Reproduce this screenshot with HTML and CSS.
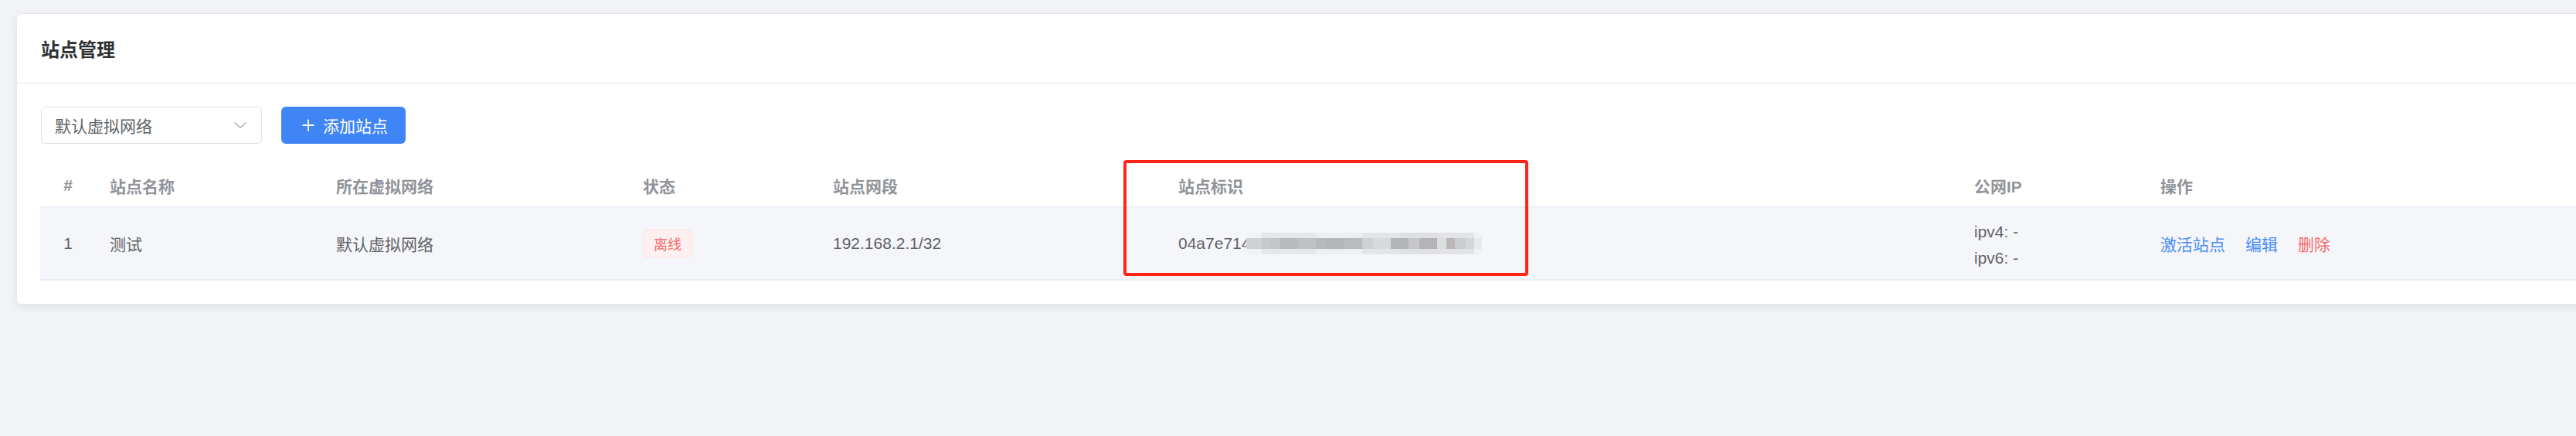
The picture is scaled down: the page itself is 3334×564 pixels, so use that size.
FILE: index.html
```html
<!DOCTYPE html>
<html lang="zh-CN">
<head>
<meta charset="utf-8">
<title>站点管理</title>
<link rel="stylesheet" href="styles.css">
</head>
<body>
<div class="page">
  <div class="card">
    <div class="card-header">站点管理</div>
    <div class="card-body">
      <div class="toolbar">
        <div class="select">
          <span class="select-text">默认虚拟网络</span>
          <svg class="select-arrow" width="16" height="8" viewBox="0 0 16 8"><path d="M0.5 0.5 L8 7.3 L15.5 0.5" fill="none" stroke="#a8abb2" stroke-width="1.3"/></svg>
        </div>
        <button class="btn-primary">
          <svg class="plus" width="16" height="16" viewBox="0 0 16 16"><path d="M8 0.5 V15.5 M0.5 8 H15.5" stroke="#fff" stroke-width="1.8" fill="none"/></svg>
          <span>添加站点</span>
        </button>
      </div>
      <div class="table">
        <div class="tr thead">
          <div class="cell idx">#</div>
          <div class="cell">站点名称</div>
          <div class="cell">所在虚拟网络</div>
          <div class="cell">状态</div>
          <div class="cell">站点网段</div>
          <div class="cell">站点标识</div>
          <div class="cell">公网IP</div>
          <div class="cell">操作</div>
        </div>
        <div class="tr tbody">
          <div class="cell idx">1</div>
          <div class="cell">测试</div>
          <div class="cell">默认虚拟网络</div>
          <div class="cell"><span class="tag-danger">离线</span></div>
          <div class="cell">192.168.2.1/32</div>
          <div class="cell"><span class="sid">04a7e714</span><span class="mosaic"></span></div>
          <div class="cell ips"><div>ipv4: -</div><div>ipv6: -</div></div>
          <div class="cell ops">
            <span class="link">激活站点</span>
            <span class="link">编辑</span>
            <span class="link danger">删除</span>
          </div>
        </div>
        <div class="highlight"></div>
      </div>
    </div>
  </div>
</div>
</body>
</html>
```
FILE: styles.css
```css
html, body {
  margin: 0;
  padding: 0;
}
body {
  background: #f2f3f7;
  font-family: "Liberation Sans", "Noto Sans CJK SC", sans-serif;
  overflow: hidden;
  width: 3334px;
  height: 564px;
}
.page {
  padding: 17px 0 0 21px;
}
.card {
  width: 3360px;
  background: #fff;
  border: 1px solid #e6e7ec;
  border-radius: 6px;
  box-shadow: 0 3px 12px rgba(0, 0, 0, 0.08);
}
.card-header {
  height: 90px;
  box-sizing: border-box;
  padding: 0 31px;
  display: flex;
  align-items: center;
  font-size: 24px;
  font-weight: 700;
  color: #303133;
  border-bottom: 1px solid #e6e7ec;
}
.card-body {
  padding: 30px 30px 30px 30px;
}
.toolbar {
  display: flex;
  align-items: center;
  gap: 25px;
  padding-left: 1px;
}
.select {
  width: 286px;
  height: 48px;
  box-sizing: border-box;
  border: 1px solid #dcdfe6;
  border-radius: 6px;
  display: flex;
  align-items: center;
  justify-content: space-between;
  padding: 0 19px 0 17px;
  font-size: 21px;
  color: #606266;
}
.select-arrow {
  display: block;
}
.btn-primary {
  height: 48px;
  width: 161px;
  box-sizing: border-box;
  border: none;
  border-radius: 6px;
  background: #3f85f6;
  color: #fff;
  font-family: inherit;
  font-size: 21px;
  display: flex;
  align-items: center;
  gap: 11px;
  padding: 0 0 0 27px;
}
.plus {
  display: block;
}
.table {
  position: relative;
  margin-top: 27px;
  font-size: 21px;
}
.tr {
  display: grid;
  grid-template-columns: 72px 293px 397px 246px 447px 1030px 241px 1fr;
  align-items: center;
  box-sizing: border-box;
  border-bottom: 2px solid #ebeef5;
}
.thead {
  height: 56px;
  color: #909399;
  font-weight: 700;
}
.tbody {
  height: 94px;
  background: #f5f6fa;
  color: #606266;
}
.cell {
  padding-left: 18px;
  white-space: nowrap;
}
.cell.idx {
  padding-left: 0;
  text-align: center;
}
.tag-danger {
  display: inline-flex;
  align-items: center;
  height: 36px;
  box-sizing: border-box;
  padding: 0 13px;
  font-size: 18px;
  color: #f56c6c;
  background: #fef0f0;
  border: 1px solid #fde2e2;
  border-radius: 6px;
}
.sid {
  vertical-align: middle;
}
.mosaic {
  display: inline-block;
  vertical-align: middle;
  width: 305px;
  height: 28px;
  margin-left: -5px;
  background:
    linear-gradient(to right,
      #d0d1d5 0 20px, #c8c9ce 20px 30px, #c5c6ca 30px 44px, #b9babe 44px 67px,
      #bfc0c4 67px 90px, #b8b9bd 90px 104px, #b5b6ba 104px 127px, #babbbf 127px 150px,
      #cfd0d4 150px 164px, #d8d9dc 164px 187px, #b3b4b8 187px 210px, #c6c7ca 210px 224px,
      #b4b4b8 224px 247px, #dcdde0 247px 259px, #bbb6b7 259px 270px, #cbcdd1 270px 284px,
      #d5d6da 284px 295px, #e8e9ec 295px 305px) 0 7px / 100% 14px no-repeat,
    linear-gradient(to right,
      #f1f2f5 0 20px, #e6e7ea 20px 90px, #eeeff2 90px 150px, #e4e5e8 150px 200px,
      #dfe0e3 200px 247px, #e2e3e6 247px 295px, #f0f1f4 295px 305px) 0 0 / 100% 100% no-repeat;
}
.ips {
  line-height: 34px;
  padding-top: 4px;
}
.ops {
  display: flex;
  gap: 26px;
}
.link {
  color: #4a8cf7;
}
.link.danger {
  color: #f26c6c;
}
.highlight {
  position: absolute;
  left: 1402px;
  top: -6px;
  width: 524px;
  height: 150px;
  box-sizing: border-box;
  border: 4px solid #ff2418;
  border-radius: 4px;
  pointer-events: none;
}
```
